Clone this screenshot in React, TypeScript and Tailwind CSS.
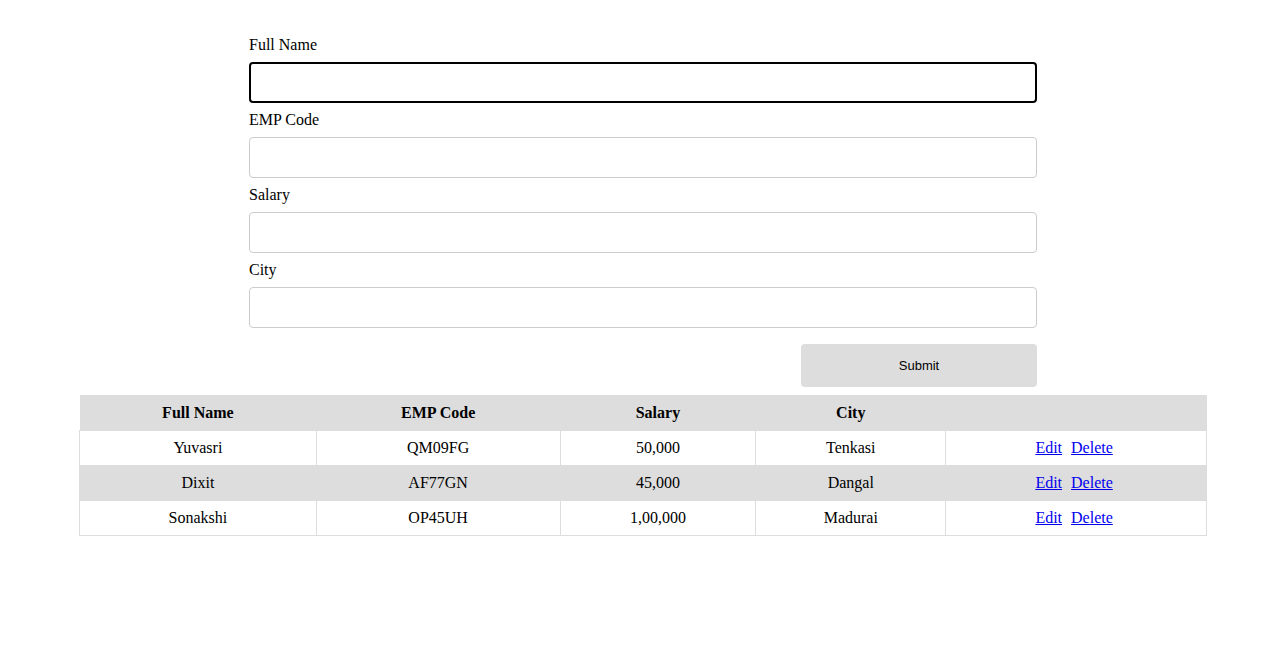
import { useState } from 'react';

type Employee = {
  fullName: string;
  empCode: string;
  salary: string;
  city: string;
};

const EMPLOYEES: Employee[] = [
  { fullName: 'Yuvasri', empCode: 'QM09FG', salary: '50,000', city: 'Tenkasi' },
  { fullName: 'Dixit', empCode: 'AF77GN', salary: '45,000', city: 'Dangal' },
  { fullName: 'Sonakshi', empCode: 'OP45UH', salary: '1,00,000', city: 'Madurai' },
];

const FIELDS: { key: keyof Employee; label: string }[] = [
  { key: 'fullName', label: 'Full Name' },
  { key: 'empCode', label: 'EMP Code' },
  { key: 'salary', label: 'Salary' },
  { key: 'city', label: 'City' },
];

export default function App() {
  const [form, setForm] = useState<Employee>({ fullName: '', empCode: '', salary: '', city: '' });

  return (
    <div className="min-h-screen bg-white text-black font-['Liberation_Serif',serif] text-base">
      {/* Form */}
      <form
        className="w-[788px] mx-auto pt-[28px]"
        onSubmit={(e) => e.preventDefault()}
      >
        {FIELDS.map(({ key, label }, i) => (
          <div key={key}>
            <label className="block mt-2 mb-2 leading-[18px]">{label}</label>
            <input
              autoFocus={i === 0}
              value={form[key]}
              onChange={(e) => setForm({ ...form, [key]: e.target.value })}
              className={`block w-full h-[41px] rounded px-5 outline-none bg-white ${
                i === 0 ? 'border-2 border-black' : 'border border-[#cccccc]'
              }`}
            />
          </div>
        ))}
        <div className="flex justify-end mt-4">
          <button
            type="submit"
            className="w-[236px] h-[43px] rounded bg-[#dddddd] text-[13px] font-['Liberation_Sans',sans-serif]"
          >
            Submit
          </button>
        </div>
      </form>

      {/* Table */}
      <table className="w-[1128px] mx-auto mt-2 border-collapse text-center">
        <thead>
          <tr className="bg-[#dddddd] h-[35px]">
            <th className="w-[237px] pt-px font-bold">Full Name</th>
            <th className="w-[244px] pt-px font-bold">EMP Code</th>
            <th className="w-[196px] pt-px font-bold">Salary</th>
            <th className="w-[190px] pt-px font-bold">City</th>
            <th className="w-[261px]"></th>
          </tr>
        </thead>
        <tbody>
          {EMPLOYEES.map((emp, i) => (
            <tr key={emp.empCode} className={`h-[35px] ${i % 2 === 1 ? 'bg-[#dddddd]' : 'bg-white'}`}>
              <td className="border border-[#dddddd]">{emp.fullName}</td>
              <td className="border border-[#dddddd]">{emp.empCode}</td>
              <td className="border border-[#dddddd]">{emp.salary}</td>
              <td className="border border-[#dddddd]">{emp.city}</td>
              <td className="border border-[#dddddd] pr-1">
                <a href="#" className="text-[#0000ee] underline">Edit</a>
                <a href="#" className="text-[#0000ee] underline ml-[9px]">Delete</a>
              </td>
            </tr>
          ))}
        </tbody>
      </table>
    </div>
  );
}
